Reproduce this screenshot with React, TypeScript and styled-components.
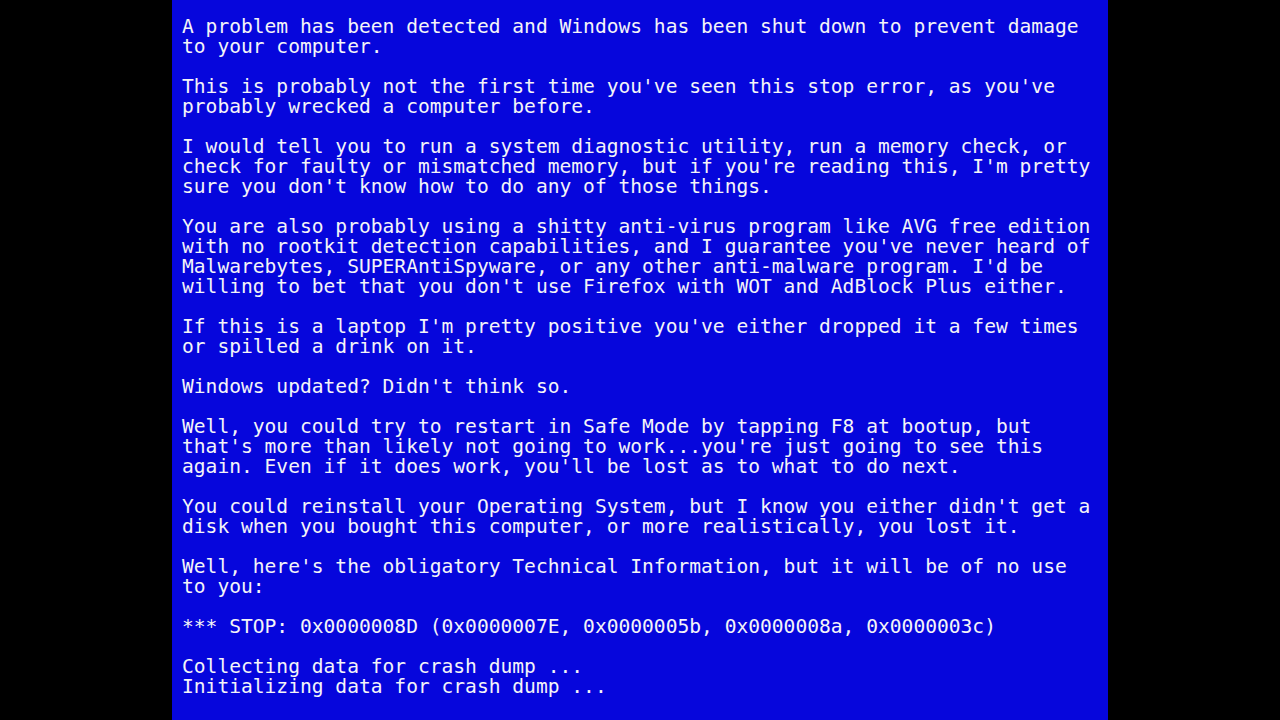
import React from "react";
import styled, { createGlobalStyle } from "styled-components";

const Global = createGlobalStyle`
  html, body { margin: 0; padding: 0; background: #000; }
  body { width: 1280px; height: 720px; overflow: hidden; }
`;

const Stage = styled.div`
  width: 1280px;
  height: 720px;
  background: #000;
  display: flex;
  justify-content: center;
`;

const Screen = styled.main`
  width: 936px;
  height: 720px;
  box-sizing: border-box;
  background: #0606dc;
  padding: 17px 0 0 10px;
  color: #f4f4f8;
  font-family: "DejaVu Sans Mono", "Liberation Mono", monospace;
  font-size: 19.6px;
  line-height: 20px;
  display: flex;
  flex-direction: column;
  gap: 20px;
`;

const Para = styled.p`
  margin: 0;
  white-space: pre;
`;

const paragraphs = [
  "A problem has been detected and Windows has been shut down to prevent damage\nto your computer.",
  "This is probably not the first time you've seen this stop error, as you've\nprobably wrecked a computer before.",
  "I would tell you to run a system diagnostic utility, run a memory check, or\ncheck for faulty or mismatched memory, but if you're reading this, I'm pretty\nsure you don't know how to do any of those things.",
  "You are also probably using a shitty anti-virus program like AVG free edition\nwith no rootkit detection capabilities, and I guarantee you've never heard of\nMalwarebytes, SUPERAntiSpyware, or any other anti-malware program. I'd be\nwilling to bet that you don't use Firefox with WOT and AdBlock Plus either.",
  "If this is a laptop I'm pretty positive you've either dropped it a few times\nor spilled a drink on it.",
  "Windows updated? Didn't think so.",
  "Well, you could try to restart in Safe Mode by tapping F8 at bootup, but\nthat's more than likely not going to work...you're just going to see this\nagain. Even if it does work, you'll be lost as to what to do next.",
  "You could reinstall your Operating System, but I know you either didn't get a\ndisk when you bought this computer, or more realistically, you lost it.",
  "Well, here's the obligatory Technical Information, but it will be of no use\nto you:",
  "*** STOP: 0x0000008D (0x0000007E, 0x0000005b, 0x0000008a, 0x0000003c)",
  "Collecting data for crash dump ...\nInitializing data for crash dump ...",
];

export default function App() {
  return (
    <>
      <Global />
      <Stage>
        <Screen>
          {paragraphs.map((p, i) => (
            <Para key={i}>{p}</Para>
          ))}
        </Screen>
      </Stage>
    </>
  );
}
